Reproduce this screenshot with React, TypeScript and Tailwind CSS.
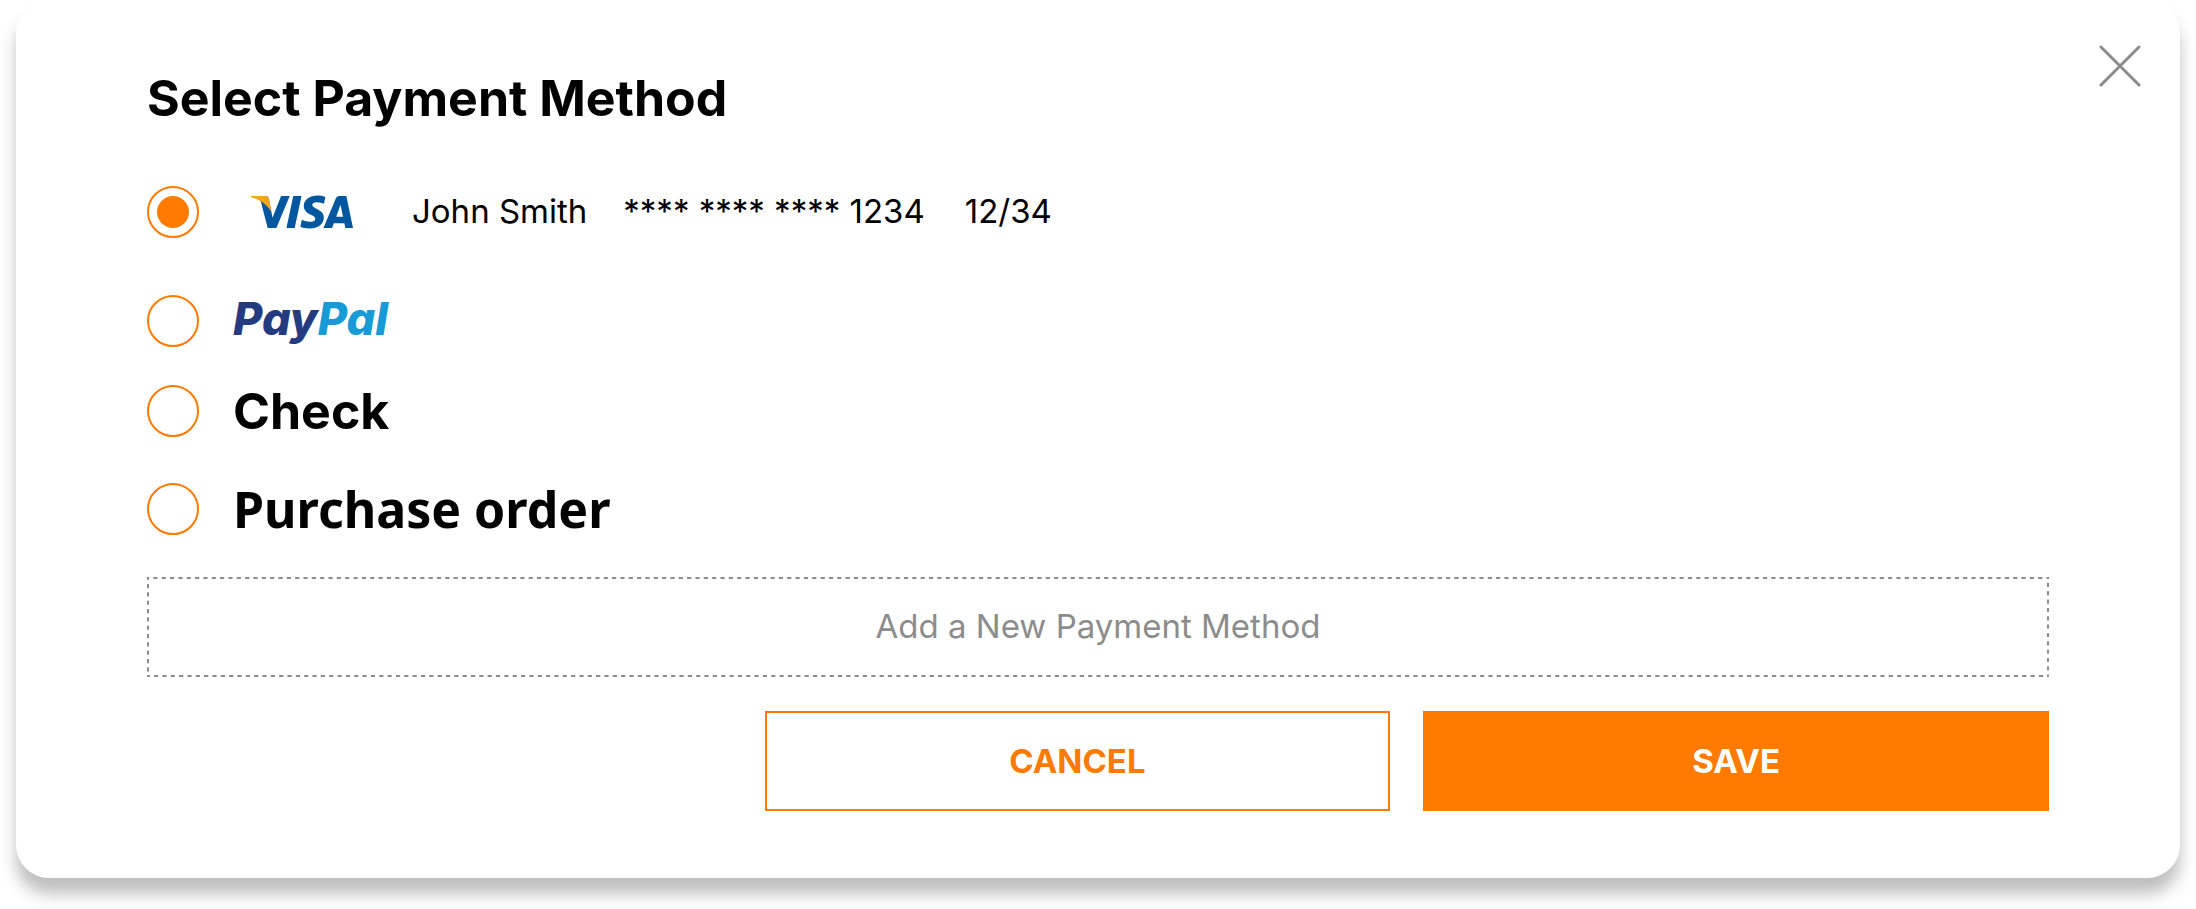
import { useState, type ReactNode } from "react";
import { SiVisa } from "react-icons/si";

function VisaLogo() {
  return (
    <svg viewBox="0 8 24 8" className="h-[34px] w-[102px]" role="img" aria-label="Visa">
      <SiVisa x="0" y="0" size={24} color="#00579f" />
      <path
        d="M0 8.26H3.35C3.8 8.26 4.15 8.58 4.24 9.03L4.8 12C3.9 10.4 2.3 9.1 0 8.48Z"
        fill="#faa61a"
      />
    </svg>
  );
}

function PayPalLogo() {
  return (
    <span className="pb-1 text-[45px] leading-[52px] font-extrabold italic text-[#253b80] [font-feature-settings:'cv11']">
      Pay<span className="text-[#179bd7]">Pal</span>
    </span>
  );
}

type OptionProps = {
  value: string;
  selected: string;
  onSelect: (value: string) => void;
  children: ReactNode;
};

function PaymentOption({ value, selected, onSelect, children }: OptionProps) {
  return (
    <label className="flex h-[52px] cursor-pointer items-center gap-[34px]">
      <input
        type="radio"
        name="payment-method"
        value={value}
        checked={selected === value}
        onChange={() => onSelect(value)}
        className="grid size-[52px] shrink-0 appearance-none place-items-center rounded-full border-2 border-[#ff7b00] before:size-8 before:rounded-full checked:before:bg-[#ff7b00]"
      />
      {children}
    </label>
  );
}

export default function App() {
  const [method, setMethod] = useState("visa");

  return (
    <div className="bg-white px-4 pb-8 font-['Inter',sans-serif] text-black">
      <section
        role="dialog"
        aria-labelledby="payment-title"
        className="relative rounded-[33px] bg-white px-[131px] pt-[68px] pb-[67px] shadow-[0_16px_16px_rgba(0,0,0,0.25)]"
      >
        <button type="button" aria-label="Close" className="absolute top-[45px] right-[39px] text-[#8c8c8c]">
          <svg viewBox="0 0 42 42" className="size-[42px]" fill="none" stroke="currentColor" strokeWidth="3" strokeLinecap="round">
            <path d="M2 2L40 40M40 2L2 40" />
          </svg>
        </button>

        <h1 id="payment-title" className="text-[50px] leading-[60px] font-bold">
          Select Payment Method
        </h1>

        <div role="radiogroup" aria-labelledby="payment-title" className="mt-[58px] flex flex-col">
          <PaymentOption value="visa" selected={method} onSelect={setMethod}>
            <span className="flex items-center pl-[18px] text-[33px] leading-10">
              <VisaLogo />
              <span className="ml-[59px] pb-0.5">John Smith</span>
              <span className="ml-9 pb-0.5">**** **** **** 1234</span>
              <span className="ml-10 pb-0.5">12/34</span>
            </span>
          </PaymentOption>
          <div className="mt-[57px]">
            <PaymentOption value="paypal" selected={method} onSelect={setMethod}>
              <PayPalLogo />
            </PaymentOption>
          </div>
          <div className="mt-[38px]">
            <PaymentOption value="check" selected={method} onSelect={setMethod}>
              <span className="text-[50px] leading-[60px] font-bold">Check</span>
            </PaymentOption>
          </div>
          <div className="mt-[46px]">
            <PaymentOption value="purchase-order" selected={method} onSelect={setMethod}>
              <span className="font-['Noto_Sans',sans-serif] text-[50px] leading-[60px] font-bold">
                Purchase order
              </span>
            </PaymentOption>
          </div>
        </div>

        <button
          type="button"
          className="relative mt-[42px] flex h-[100px] w-full items-center justify-center pb-0.5 text-[33px] leading-10 text-[#8c8c8c]"
        >
          <svg className="absolute inset-0 size-full" fill="none" aria-hidden="true">
            <rect width="100%" height="100%" stroke="#8c8c8c" strokeWidth="4" strokeDasharray="4.17 4.17" strokeDashoffset="2" />
          </svg>
          Add a New Payment Method
        </button>

        <div className="mt-[34px] flex justify-end gap-[33px] text-[33px] leading-10 font-bold">
          <button type="button" className="h-[100px] w-[32.9%] border-2 border-[#ff7b00] bg-white text-[#ff7b00]">
            CANCEL
          </button>
          <button type="button" className="h-[100px] w-[32.9%] bg-[#ff7b00] text-white">
            SAVE
          </button>
        </div>
      </section>
    </div>
  );
}
